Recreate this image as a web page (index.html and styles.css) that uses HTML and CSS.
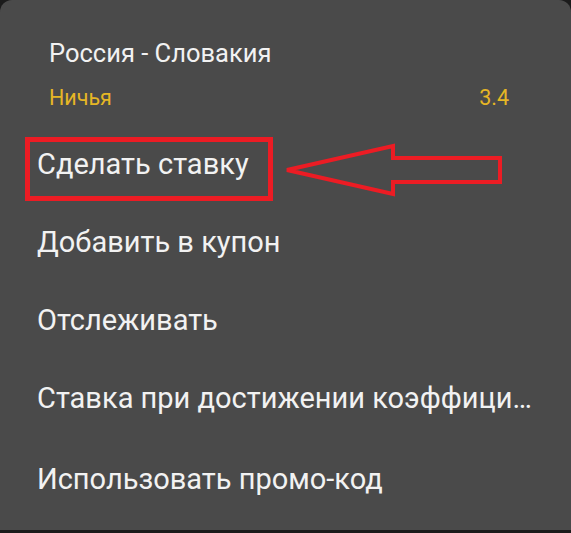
FILE: index.html
```
<!DOCTYPE html>
<html lang="ru">
<head>
    <meta charset="UTF-8">
    <meta name="viewport" content="width=device-width, initial-scale=1.0">
    <title>Меню ставки</title>
    <link rel="stylesheet" href="styles.css">
</head>
<body>
    <div class="menu">
        <!-- Event header -->
        <div class="menu-header">
            <div class="match-title">Россия - Словакия</div>
            <div class="outcome">
                <span>Ничья</span>
                <span>3.4</span>
            </div>
        </div>

        <!-- Actions -->
        <ul class="menu-list">
            <li class="menu-item">Сделать ставку</li>
            <li class="menu-item">Добавить в купон</li>
            <li class="menu-item">Отслеживать</li>
            <li class="menu-item">Ставка при достижении коэффици…</li>
            <li class="menu-item">Использовать промо-код</li>
        </ul>

        <!-- Annotation -->
        <div class="mark-box"></div>
        <svg class="mark-arrow" width="571" height="533" viewBox="0 0 571 533">
            <polygon points="287,170 393,146 393,158 500,158 500,182 393,182 393,194"
                     fill="none" stroke="#ec1c24" stroke-width="4" stroke-linejoin="miter"/>
        </svg>
    </div>
</body>
</html>
```

FILE: styles.css
```
html, body {
    margin: 0;
    padding: 0;
}
body {
    background-color: #1b1b1b;
    font-family: Roboto, 'Noto Sans', sans-serif;
    width: 571px;
    height: 533px;
    overflow: hidden;
}
.menu {
    position: relative;
    height: 530px;
    background-color: #4a4a4a;
    border-radius: 12px 12px 0 0;
    color: #f2f2f2;
}
.menu-header {
    padding: 39px 62px 0 49px;
}
.match-title {
    font-size: 25.5px;
    line-height: 28px;
}
.outcome {
    display: flex;
    justify-content: space-between;
    margin-top: 17px;
    font-size: 21.5px;
    line-height: 28px;
    color: #e6b625;
}
.menu-list {
    list-style: none;
    margin: 13px 0 0 0;
    padding: 0;
}
.menu-item {
    padding: 0 20px 0 37px;
    font-size: 29px;
    line-height: 78px;
    height: 78px;
    white-space: nowrap;
}
.menu-item:last-child {
    padding-top: 3px;
}
.mark-box {
    position: absolute;
    left: 25px;
    top: 137px;
    width: 238px;
    height: 54px;
    border: 5px solid #ec1c24;
}
.mark-arrow {
    position: absolute;
    left: 0;
    top: 0;
}
```
